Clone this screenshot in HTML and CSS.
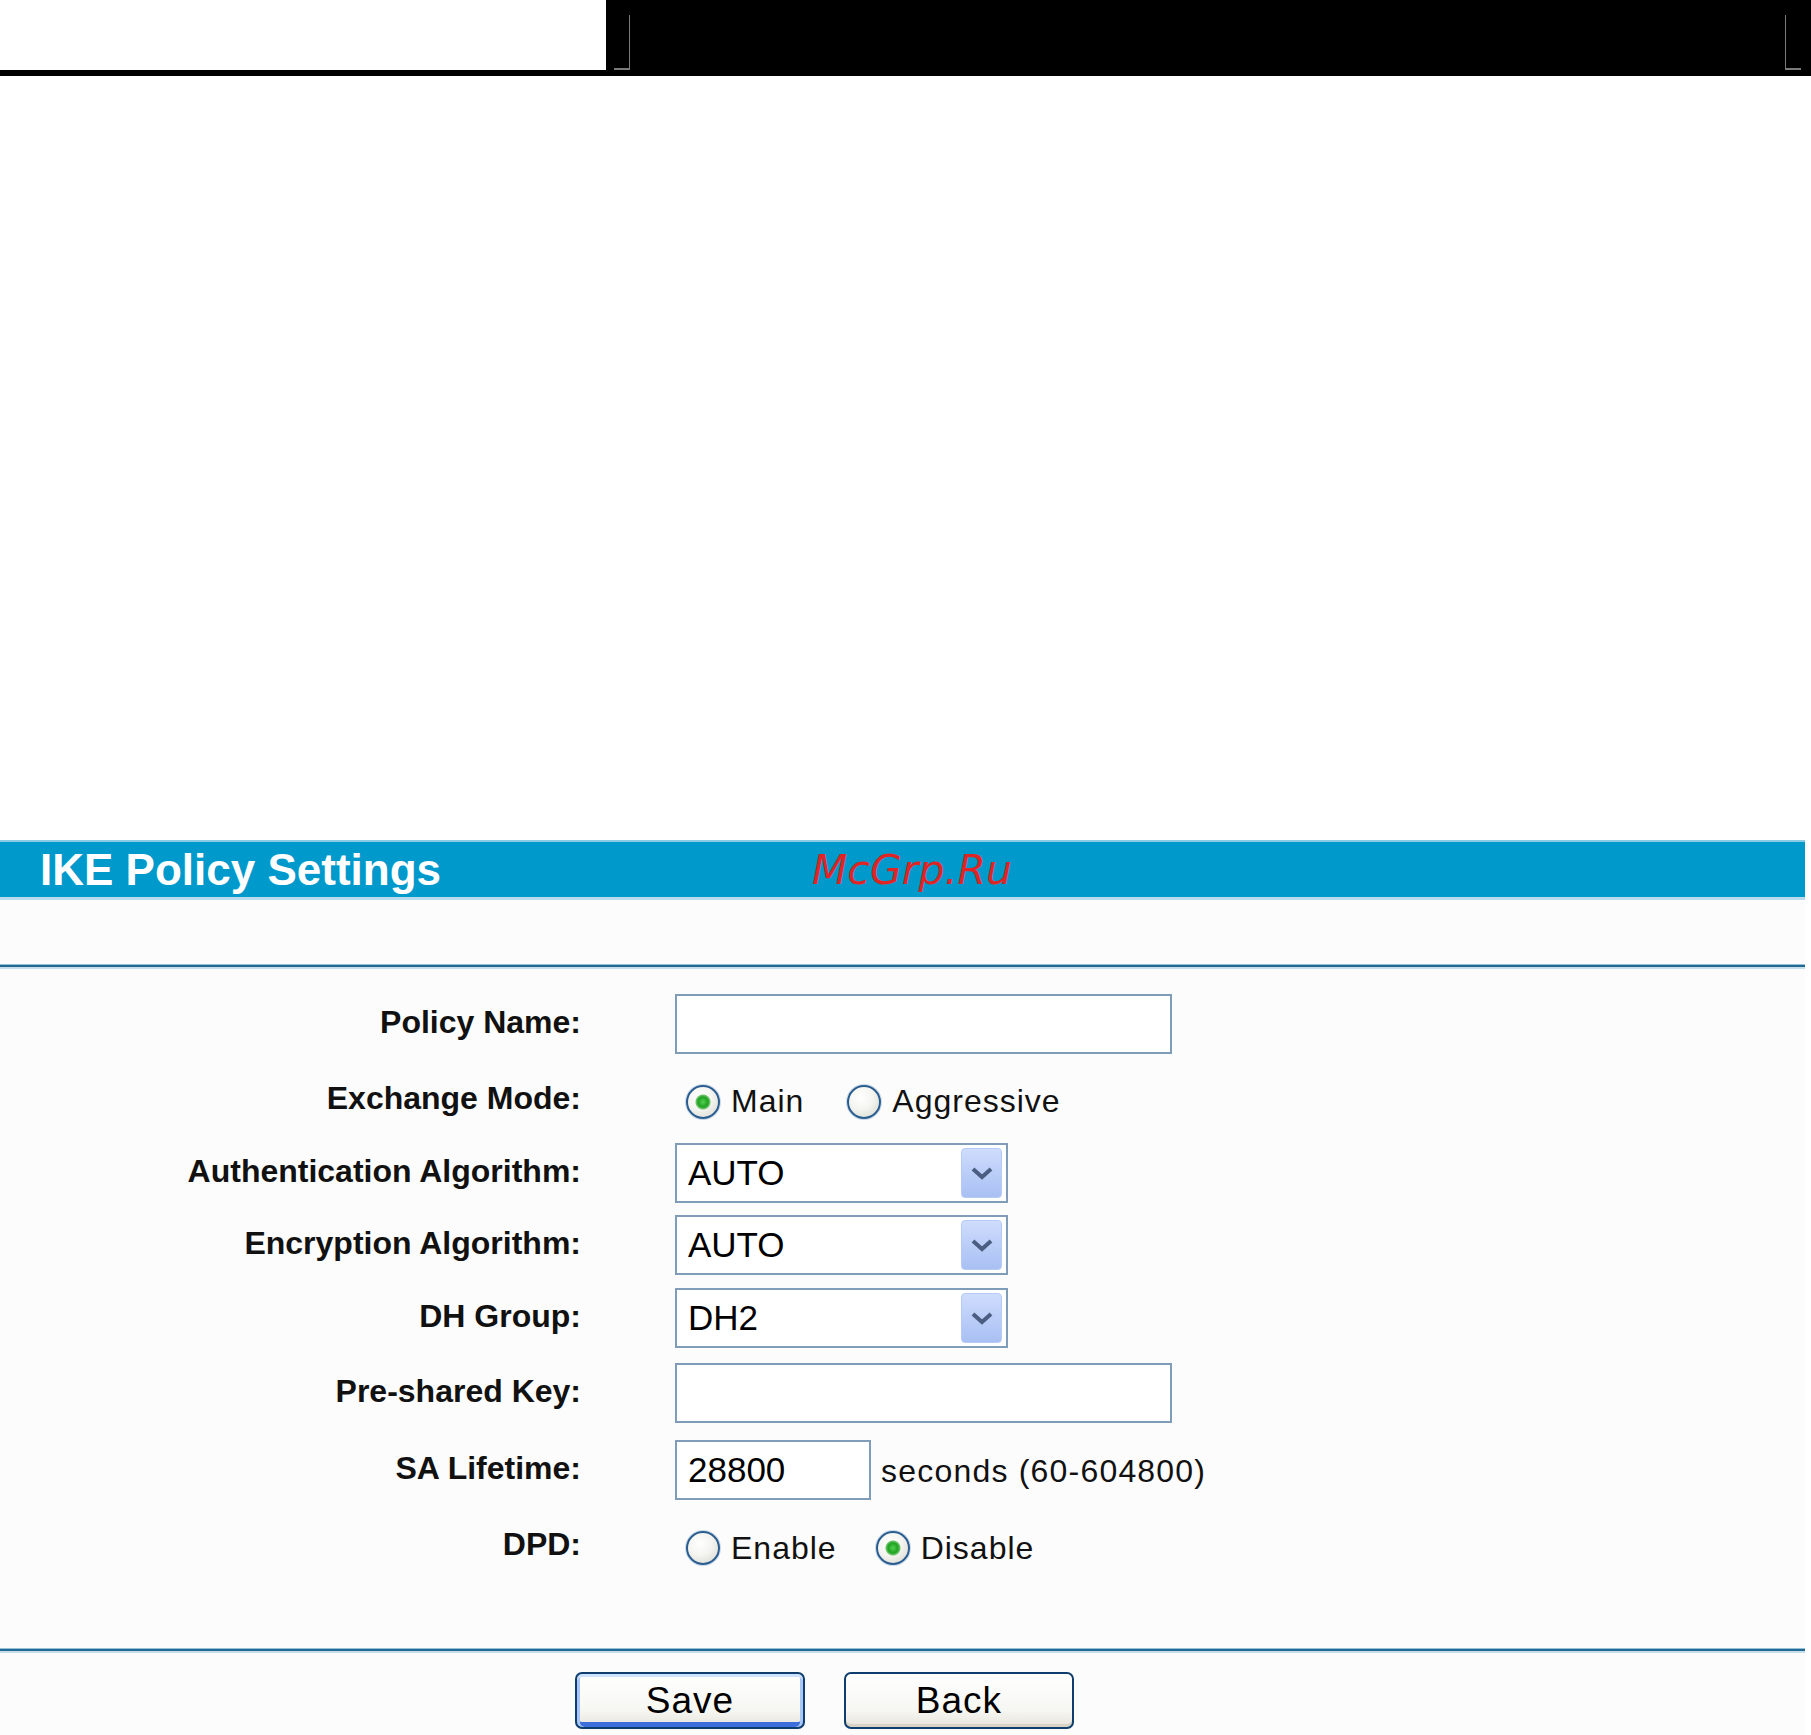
FILE: index.html
```html
<!DOCTYPE html>
<html lang="en">
<head>
  <meta charset="UTF-8" />
  <title>IKE Policy Settings</title>
  <link rel="stylesheet" href="styles.css">
</head>
<body>
  <div class="topbar">
    <div class="logo-box"></div>
    <div class="banner">
      <span class="bracket bracket-left"></span>
      <span class="bracket bracket-right"></span>
    </div>
  </div>

  <div class="panel">
    <div class="title-bar">
      <span class="title">IKE Policy Settings</span>
      <span class="watermark">McGrp.Ru</span>
    </div>
    <div class="blank"></div>
    <div class="rule"></div>

    <div class="form">
      <div class="row r1">
        <div class="label">Policy Name:</div>
        <div class="field"><input class="text wide" type="text" value=""></div>
      </div>
      <div class="row r2">
        <div class="label">Exchange Mode:</div>
        <div class="field">
          <label class="option opt-main"><input class="radio" type="radio" name="mode" checked>Main</label>
          <label class="option"><input class="radio" type="radio" name="mode">Aggressive</label>
        </div>
      </div>
      <div class="row r3">
        <div class="label">Authentication Algorithm:</div>
        <div class="field">
          <div class="select"><span class="select-value">AUTO</span><span class="drop"><svg width="24" height="14" viewBox="0 0 24 14"><path d="M3 3 L12 11 L21 3" fill="none" stroke="#4b5e82" stroke-width="4"/></svg></span></div>
        </div>
      </div>
      <div class="row r4">
        <div class="label">Encryption Algorithm:</div>
        <div class="field">
          <div class="select"><span class="select-value">AUTO</span><span class="drop"><svg width="24" height="14" viewBox="0 0 24 14"><path d="M3 3 L12 11 L21 3" fill="none" stroke="#4b5e82" stroke-width="4"/></svg></span></div>
        </div>
      </div>
      <div class="row r5">
        <div class="label">DH Group:</div>
        <div class="field">
          <div class="select"><span class="select-value">DH2</span><span class="drop"><svg width="24" height="14" viewBox="0 0 24 14"><path d="M3 3 L12 11 L21 3" fill="none" stroke="#4b5e82" stroke-width="4"/></svg></span></div>
        </div>
      </div>
      <div class="row r6">
        <div class="label">Pre-shared Key:</div>
        <div class="field"><input class="text wide" type="text" value=""></div>
      </div>
      <div class="row r7">
        <div class="label">SA Lifetime:</div>
        <div class="field">
          <input class="text short" type="text" value="28800">
          <span class="hint">seconds (60-604800)</span>
        </div>
      </div>
      <div class="row r8">
        <div class="label">DPD:</div>
        <div class="field">
          <label class="option opt-enable"><input class="radio" type="radio" name="dpd">Enable</label>
          <label class="option"><input class="radio" type="radio" name="dpd" checked>Disable</label>
        </div>
      </div>
    </div>

    <div class="rule bottom-rule"></div>
    <div class="buttons">
      <button class="btn btn-default">Save</button>
      <button class="btn">Back</button>
    </div>
  </div>
</body>
</html>
```

FILE: styles.css
```css
body, html {
  margin: 0;
  padding: 0;
  height: 100%;
  overflow: hidden;
  background: #fff;
  font-family: "Liberation Sans", Arial, sans-serif;
}
.topbar {
  display: flex;
  height: 76px;
  background: #000;
}
.logo-box {
  width: 606px;
  height: 70px;
  background: #fff;
}
.banner {
  flex: 1;
  display: flex;
  justify-content: space-between;
  padding: 15px 10px 0 8px;
}
.bracket {
  width: 15px;
  height: 53px;
  border-bottom: 2px solid #7a7a7a;
}
.bracket-left {
  border-right: 1px solid #7a7a7a;
}
.bracket-right {
  border-left: 1px solid #7a7a7a;
}
.panel {
  width: 1805px;
  margin-top: 764px;
  background: #fcfcfc;
}
.title-bar {
  display: flex;
  align-items: center;
  height: 55px;
  padding-left: 40px;
  background: #0099cc;
  border-top: 2px solid #8ccbe6;
  border-bottom: 3px solid #b8dcee;
}
.title {
  width: 772px;
  font-size: 44px;
  font-weight: bold;
  color: #fff;
}
.watermark {
  font-family: "DejaVu Sans", sans-serif;
  font-style: italic;
  font-size: 41px;
  color: #e02424;
}
.blank {
  height: 64px;
}
.rule {
  height: 2px;
  background: #236a93;
  border-top: 1px solid #94c0da;
  border-bottom: 2px solid #c6deec;
}
.form {
  padding-top: 16px;
  padding-bottom: 64px;
}
.row {
  display: grid;
  grid-template-columns: 581px 1fr;
  column-gap: 94px;
  align-items: center;
}
.r1 { height: 77px; }
.r2 { height: 75px; }
.r3 { height: 72px; }
.r4 { height: 72px; }
.r5 { height: 74px; }
.r6 { height: 76px; }
.r7 { height: 77px; }
.r8 { height: 76px; }
.label {
  text-align: right;
  font-size: 32px;
  font-weight: bold;
  color: #111;
  padding-bottom: 3px;
}
.field {
  display: flex;
  align-items: center;
  font-size: 32px;
  letter-spacing: 1px;
  color: #111;
}
.text {
  box-sizing: border-box;
  height: 60px;
  margin: 0;
  padding: 0 0 0 11px;
  border: 2px solid #7f9db9;
  background: #fff;
  font-family: "Liberation Sans", Arial, sans-serif;
  font-size: 35px;
  color: #000;
  outline: none;
}
.wide {
  width: 497px;
}
.short {
  width: 196px;
}
.hint {
  margin-left: 10px;
  letter-spacing: 1.2px;
  padding-top: 4px;
}
.option {
  display: inline-flex;
  align-items: center;
  padding-left: 11px;
  padding-top: 4px;
}
.opt-main {
  margin-right: 32px;
}
.opt-enable {
  margin-right: 28px;
}
.radio {
  appearance: none;
  -webkit-appearance: none;
  box-sizing: border-box;
  width: 34px;
  height: 34px;
  margin: 0 11px 0 0;
  border-radius: 50%;
  border: 2px solid #2a5d8f;
  background: radial-gradient(circle at 40% 35%, #ffffff 0%, #f4f4f0 45%, #d6d6ce 100%);
  box-shadow: 0 0 0 1px #c9d9e8;
}
.radio:checked {
  background:
    radial-gradient(circle, #4fd14f 0, #21a121 5px, #6fc66f 7px, transparent 8px),
    radial-gradient(circle at 40% 35%, #ffffff 0%, #f4f4f0 45%, #d6d6ce 100%);
}
.select {
  box-sizing: border-box;
  display: flex;
  align-items: center;
  width: 333px;
  height: 60px;
  padding: 3px 4px 3px 11px;
  border: 2px solid #7f9db9;
  background: #fff;
}
.select-value {
  flex: 1;
  font-size: 35px;
  letter-spacing: 0;
  color: #000;
}
.drop {
  box-sizing: border-box;
  display: flex;
  align-items: center;
  justify-content: center;
  width: 41px;
  height: 50px;
  border: 1px solid #b6cbf5;
  border-radius: 4px;
  background: linear-gradient(#cfdcfd, #b7cbf7 60%, #a9c0f3);
}
.bottom-rule {
  margin: 0;
}
.buttons {
  display: flex;
  gap: 39px;
  padding: 19px 0 0 575px;
  height: 63px;
}
.btn {
  box-sizing: border-box;
  width: 230px;
  height: 57px;
  padding: 0;
  border: 2px solid #0f3e6e;
  border-radius: 7px;
  background: linear-gradient(#ffffff, #f6f6f2 70%, #e6e3da);
  box-shadow: inset 0 -3px 0 #d8d3c6;
  font-family: "Liberation Sans", Arial, sans-serif;
  font-size: 37px;
  letter-spacing: 1px;
  color: #000;
}
.btn-default {
  box-shadow: inset 0 3px 0 #cfe2fd, inset 3px 0 0 #a8c6f7, inset -3px 0 0 #a8c6f7, inset 0 -5px 0 #3d6fdc;
}
```
